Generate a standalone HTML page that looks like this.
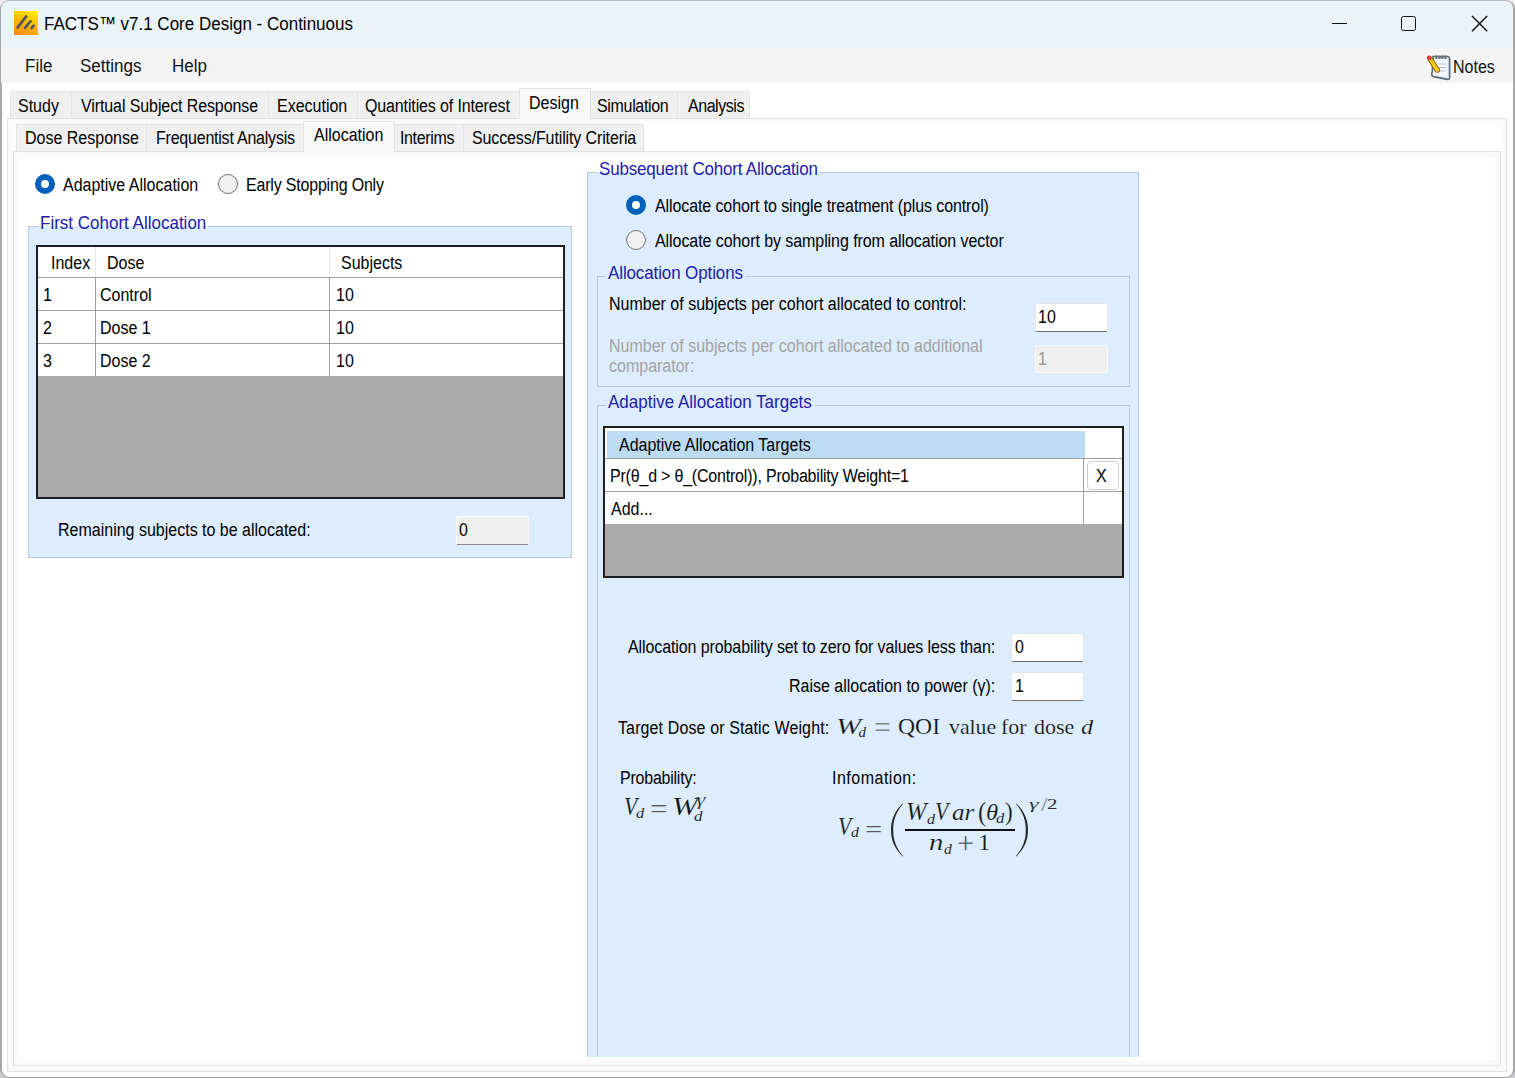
<!DOCTYPE html>
<html><head><meta charset="utf-8">
<style>
*{box-sizing:border-box;margin:0;padding:0}
html,body{width:1515px;height:1078px;overflow:hidden;background:linear-gradient(#eeeeee,#cdcdcf);font-family:"Liberation Sans",sans-serif;color:#000;position:relative}
.a{position:absolute}
.t{position:absolute;white-space:nowrap;font-size:16px;line-height:16px;color:#000;transform:scaleY(1.1);transform-origin:0 13.5px;margin-top:1px}
#win{position:absolute;left:0;top:0;width:1515px;height:1078px;border:2px solid #a8a8a8;border-top-color:#b8b8b8;border-bottom:1.5px solid #9c9c9c;border-radius:9px;background:#fff}
#title{position:absolute;left:1px;top:1px;width:1512px;height:46px;background:#eaf4f7;border-radius:8px 8px 0 0}
#menu{position:absolute;left:1px;top:47px;width:1512px;height:36px;background:#f4f4f4}
.tab{position:absolute;background:#f0f0f0;border:1px solid #e3e3e3;border-bottom:none}
.tab.sel{background:#f9f9f9;border-color:#e3e3e3}
.frame{position:absolute;border:1px solid #e3e3e3}
.grp{position:absolute;border:1px solid #b4c8dc;background:#ddedfd}
.gt{position:absolute;white-space:nowrap;font-size:17px;line-height:17px;color:#2020a8;transform:scaleY(1.1);transform-origin:0 14.4px}
.radio{position:absolute;width:20px;height:20px;border-radius:50%}
.radio.on{background:#fff;border:6px solid #005fb8}
.radio.off{background:#f2f2f2;border:1.5px solid #727272}
.tb{position:absolute;background:#fff;border:1px solid #e2e6ea;border-bottom:1.5px solid #6e6e6e;border-radius:2px}
.tb.dis{background:#f0f0f0;border:1px solid #fafafa;border-bottom:1.5px solid #8a8a8a}
.hl{position:absolute;background:#a0a0a0;height:1px}
.vl{position:absolute;background:#a0a0a0;width:1px}
.m{font-family:"Liberation Serif",serif;font-style:italic;color:#1a1a1a;position:absolute;white-space:nowrap;line-height:1}
.r{font-family:"Liberation Serif",serif;font-style:normal}
.mg{position:absolute;white-space:nowrap;font-family:"Liberation Serif",serif;color:#111;-webkit-text-stroke:0.2px #ddedfd}
</style></head><body>
<div id="win"></div>
<div id="title"></div>
<div id="menu"></div>

<!-- title bar -->
<svg class="a" style="left:14px;top:11px" width="24" height="24" viewBox="0 0 24 24">
  <defs><linearGradient id="ig" x1="0.75" y1="0" x2="0.25" y2="1"><stop offset="0" stop-color="#ffea00"/><stop offset="1" stop-color="#f98a10"/></linearGradient></defs>
  <rect width="24" height="24" fill="url(#ig)"/>
  <g stroke="#585858" stroke-width="2.7" stroke-linecap="round">
    <line x1="3.6" y1="16.6" x2="12.2" y2="5.4"/><line x1="11" y1="16.8" x2="16.6" y2="10.2"/><line x1="17.6" y1="17" x2="19.7" y2="14.6"/>
  </g>
</svg>
<div class="t" style="left:44px;top:15px;font-size:17px;line-height:17px">FACTS™ v7.1 Core Design - Continuous</div>
<div class="a" style="left:1332px;top:23px;width:15px;height:1.3px;background:#111"></div>
<div class="a" style="left:1401px;top:16px;width:15px;height:15px;border:1.6px solid #111;border-radius:2.5px"></div>
<svg class="a" style="left:1471px;top:15px" width="18" height="18" viewBox="0 0 18 18"><g stroke="#111" stroke-width="1.4"><line x1="1" y1="1" x2="16.2" y2="16.2"/><line x1="16.2" y1="1" x2="1" y2="16.2"/></g></svg>

<!-- menu -->
<div class="t" style="left:25px;top:57px;font-size:17px;line-height:17px;color:#111">File</div>
<div class="t" style="left:80px;top:57px;font-size:17px;line-height:17px;color:#111">Settings</div>
<div class="t" style="left:172px;top:57px;font-size:17px;line-height:17px;color:#111">Help</div>
<svg class="a" style="left:1422px;top:50px" width="34" height="34" viewBox="0 0 34 34">
  <path d="M11 6.5 L26 6.5 Q27.6 7 27.6 9 L27.6 27.8 Q27.4 29.6 25.5 29.4 L11.5 26.6 Q9.6 26 9.6 24.2 L10.3 21.5 Z" fill="#e3ebf4" stroke="#5d6872" stroke-width="1.6"/>
  <path d="M12.5 9 L25.5 9 L25.5 26.5 L12 24.5 Z" fill="#f2f6fb"/>
  <g stroke="#b7c7d9" stroke-width="1"><line x1="17" y1="14" x2="24" y2="14"/><line x1="17" y1="17.5" x2="24" y2="17.5"/><line x1="17" y1="21" x2="24" y2="21"/></g>
  <g fill="#6a737b"><rect x="13.5" y="5.5" width="2" height="3.5"/><rect x="16.5" y="5.5" width="2" height="3.5"/><rect x="19.5" y="5.5" width="2" height="3.5"/><rect x="22.5" y="5.5" width="2" height="3.5"/></g>
  <line x1="8.6" y1="9.6" x2="15.3" y2="20.2" stroke="#7a5e10" stroke-width="5.4" stroke-linecap="round"/>
  <line x1="8.6" y1="9.6" x2="15.3" y2="20.2" stroke="#f2cc12" stroke-width="3.6" stroke-linecap="round"/>
  <circle cx="7.2" cy="8" r="2.4" fill="#d8453a"/>
  <path d="M13.2 22 L16.6 21 L14.8 23.8 Z" fill="#e7a8a0"/>
</svg>
<div class="t" style="left:1453px;top:59px;color:#111">Notes</div>

<!-- outer tab frame -->
<div class="frame" style="left:7px;top:118px;width:1500px;height:954px;border-color:#e2e2e2;box-shadow:inset 0 0 0 1px #f7f7f7,inset 0 0 0 5px #fbfbfb"></div>
<div class="tab" style="left:10px;top:91px;width:62px;height:27px"></div>
<div class="tab" style="left:71px;top:91px;width:198px;height:27px"></div>
<div class="tab" style="left:268px;top:91px;width:90px;height:27px"></div>
<div class="tab" style="left:357px;top:91px;width:163px;height:27px"></div>
<div class="tab sel" style="left:519px;top:88px;width:72px;height:31px;border-bottom:none"></div>
<div class="tab" style="left:590px;top:91px;width:88px;height:27px"></div>
<div class="tab" style="left:677px;top:91px;width:73px;height:27px"></div>
<div class="t" style="left:18px;top:98px">Study</div>
<div class="t" style="left:81px;top:98px;letter-spacing:-0.1px">Virtual Subject Response</div>
<div class="t" style="left:277px;top:98px">Execution</div>
<div class="t" style="left:365px;top:98px;letter-spacing:-0.13px">Quantities of Interest</div>
<div class="t" style="left:529px;top:95px">Design</div>
<div class="t" style="left:597px;top:98px;letter-spacing:-0.33px">Simulation</div>
<div class="t" style="left:688px;top:98px;letter-spacing:-0.45px">Analysis</div>

<!-- inner tab frame -->
<div class="frame" style="left:13px;top:151px;width:1488px;height:915px;border-color:#e2e2e2;box-shadow:inset 0 0 0 5px #fafafa"></div>
<div class="tab" style="left:16px;top:124px;width:131px;height:27px"></div>
<div class="tab" style="left:146px;top:124px;width:158px;height:27px"></div>
<div class="tab sel" style="left:303px;top:121px;width:92px;height:31px"></div>
<div class="tab" style="left:394px;top:124px;width:70px;height:27px"></div>
<div class="tab" style="left:463px;top:124px;width:181px;height:27px"></div>
<div class="t" style="left:25px;top:130px">Dose Response</div>
<div class="t" style="left:156px;top:130px;letter-spacing:-0.22px">Frequentist Analysis</div>
<div class="t" style="left:314px;top:127px">Allocation</div>
<div class="t" style="left:400px;top:130px;letter-spacing:-0.36px">Interims</div>
<div class="t" style="left:472px;top:130px;letter-spacing:-0.12px">Success/Futility Criteria</div>

<!-- left: radios -->
<div class="radio on" style="left:35px;top:174px"></div>
<div class="t" style="left:63px;top:177px">Adaptive Allocation</div>
<div class="radio off" style="left:218px;top:174px"></div>
<div class="t" style="left:246px;top:177px;letter-spacing:-0.19px">Early Stopping Only</div>

<!-- First cohort group -->
<div class="grp" style="left:28px;top:226px;width:544px;height:332px"></div>
<div class="gt" style="left:38px;top:215px;padding:0 2px;background:linear-gradient(#fff 0,#fff 11px,#ddedfd 11px)">First Cohort Allocation</div>
<div class="a" style="left:36px;top:245px;width:529px;height:254px;border:2px solid #1e1e1e;background:#ababab"></div>
<div class="a" style="left:38px;top:247px;width:525px;height:129px;background:#fff"></div>
<div class="hl" style="left:38px;top:277px;width:525px"></div>
<div class="hl" style="left:38px;top:310px;width:525px"></div>
<div class="hl" style="left:38px;top:343px;width:525px"></div>
<div class="vl" style="left:95px;top:277px;height:99px"></div>
<div class="vl" style="left:329px;top:277px;height:99px"></div>
<div class="a" style="left:95px;top:247px;width:1px;height:29px;background:#e6e6e6"></div>
<div class="a" style="left:329px;top:247px;width:1px;height:29px;background:#e6e6e6"></div>
<div class="t" style="left:51px;top:255px">Index</div>
<div class="t" style="left:107px;top:255px">Dose</div>
<div class="t" style="left:341px;top:255px">Subjects</div>
<div class="t" style="left:43px;top:287px">1</div>
<div class="t" style="left:100px;top:287px">Control</div>
<div class="t" style="left:336px;top:287px">10</div>
<div class="t" style="left:43px;top:320px">2</div>
<div class="t" style="left:100px;top:320px">Dose 1</div>
<div class="t" style="left:336px;top:320px">10</div>
<div class="t" style="left:43px;top:353px">3</div>
<div class="t" style="left:100px;top:353px">Dose 2</div>
<div class="t" style="left:336px;top:353px">10</div>
<div class="t" style="left:58px;top:522px">Remaining subjects to be allocated:</div>
<div class="tb dis" style="left:456px;top:516px;width:73px;height:29px"></div>
<div class="t" style="left:459px;top:522px">0</div>

<!-- Right: Subsequent group -->
<div class="a" style="left:0;top:0;width:1515px;height:1057px;overflow:hidden">
<div class="grp" style="left:587px;top:172px;width:552px;height:950px"></div>
<div class="grp" style="left:597px;top:405px;width:533px;height:700px"></div>
</div>
<div class="gt" style="left:597px;top:161px;padding:0 2px;background:linear-gradient(#fff 0,#fff 11px,#ddedfd 11px);letter-spacing:-0.19px">Subsequent Cohort Allocation</div>
<div class="radio on" style="left:626px;top:195px"></div>
<div class="t" style="left:655px;top:198px;letter-spacing:-0.1px">Allocate cohort to single treatment (plus control)</div>
<div class="radio off" style="left:626px;top:230px"></div>
<div class="t" style="left:655px;top:233px;letter-spacing:-0.07px">Allocate cohort by sampling from allocation vector</div>

<div class="grp" style="left:597px;top:276px;width:533px;height:111px"></div>
<div class="gt" style="left:606px;top:265px;padding:0 2px;background:#ddedfd;letter-spacing:-0.12px">Allocation Options</div>
<div class="t" style="left:609px;top:296px">Number of subjects per cohort allocated to control:</div>
<div class="tb" style="left:1035px;top:303px;width:73px;height:29px"></div>
<div class="t" style="left:1038px;top:309px">10</div>
<div class="t" style="left:609px;top:338px;color:#a3a3a3">Number of subjects per cohort allocated to additional</div>
<div class="t" style="left:609px;top:358px;color:#a3a3a3">comparator:</div>
<div class="tb dis" style="left:1035px;top:345px;width:73px;height:28px;border-bottom:1px solid #fafafa"></div>
<div class="t" style="left:1038px;top:351px;color:#9a9a9a">1</div>

<div class="gt" style="left:606px;top:394px;padding:0 2px;background:#ddedfd">Adaptive Allocation Targets</div>
<div class="a" style="left:603px;top:426px;width:521px;height:152px;border:2px solid #1e1e1e;background:#ababab"></div>
<div class="a" style="left:605px;top:428px;width:517px;height:96px;background:#fff"></div>
<div class="a" style="left:607px;top:431px;width:478px;height:28px;background:#bcdcf4"></div>
<div class="hl" style="left:605px;top:458px;width:517px"></div>
<div class="hl" style="left:605px;top:491px;width:517px"></div>
<div class="vl" style="left:1083px;top:458px;height:66px"></div>
<div class="t" style="left:619px;top:437px">Adaptive Allocation Targets</div>
<div class="t" style="left:610px;top:468px;letter-spacing:-0.2px">Pr(θ_d &gt; θ_(Control)), Probability Weight=1</div>
<div class="t" style="left:611px;top:501px">Add...</div>
<div class="a" style="left:1087px;top:461px;width:32px;height:29px;border:1px solid #d0d0d0;border-radius:4px;background:#fdfdfd"></div>
<div class="t" style="left:1096px;top:468px">X</div>

<div class="t" style="left:628px;top:639px;letter-spacing:-0.1px">Allocation probability set to zero for values less than:</div>
<div class="tb" style="left:1011px;top:633px;width:73px;height:29px"></div>
<div class="t" style="left:1015px;top:639px">0</div>
<div class="t" style="left:789px;top:678px">Raise allocation to power (γ):</div>
<div class="tb" style="left:1011px;top:672px;width:73px;height:29px"></div>
<div class="t" style="left:1015px;top:678px">1</div>
<div class="t" style="left:618px;top:720px;letter-spacing:0.12px">Target Dose or Static Weight:</div>


<div class="t" style="left:620px;top:770px;letter-spacing:-0.23px">Probability:</div>

<div class="t" style="left:832px;top:770px;letter-spacing:0.5px">Infomation:</div>

<!-- formulas -->
<div class="mg" style="left:836.27px;top:714.67px;font-size:23px;line-height:23px;font-style:italic;transform:scale(1.316,1.007);transform-origin:0 0;">W</div>
<div class="mg" style="left:858.5px;top:724.5px;font-size:15px;line-height:15px;font-style:italic;-webkit-text-stroke:0;color:#2a2a2a;">d</div>
<div class="mg" style="left:874.1px;top:713.33px;font-size:23px;line-height:23px;transform:scale(1.3,1.333);transform-origin:0 0;color:#555">=</div>
<div class="mg" style="left:897.57px;top:714.64px;font-size:23px;line-height:23px;transform:scale(1.028,1.016);transform-origin:0 0;">QOI</div>
<div class="mg" style="left:948.5px;top:715.83px;font-size:23px;line-height:23px;transform:scale(0.947,0.956);transform-origin:0 0;">value</div>
<div class="mg" style="left:1001.04px;top:715.83px;font-size:23px;line-height:23px;transform:scale(0.958,0.956);transform-origin:0 0;">for</div>
<div class="mg" style="left:1034.04px;top:715.83px;font-size:23px;line-height:23px;transform:scale(0.956,0.956);transform-origin:0 0;">dose</div>
<div class="mg" style="left:1081.15px;top:715.83px;font-size:23px;line-height:23px;font-style:italic;transform:scale(1.055,0.956);transform-origin:0 0;">d</div>
<div class="mg" style="left:623.73px;top:794.72px;font-size:25px;line-height:25px;font-style:italic;transform:scale(0.871,0.971);transform-origin:0 0;">V</div>
<div class="mg" style="left:635.8px;top:806.62px;font-size:16px;line-height:16px;font-style:italic;transform:scale(1.025,0.875);transform-origin:0 0;-webkit-text-stroke:0;color:#2a2a2a;">d</div>
<div class="mg" style="left:650.36px;top:796.2px;font-size:25px;line-height:25px;transform:scale(1.242,1.067);transform-origin:0 0;color:#555">=</div>
<div class="mg" style="left:671.91px;top:794.72px;font-size:25px;line-height:25px;font-style:italic;transform:scale(1.243,0.971);transform-origin:0 0;">W</div>
<div class="mg" style="left:695.92px;top:792.05px;font-size:15px;line-height:15px;font-style:italic;transform:scale(1.58,1.05);transform-origin:0 0;-webkit-text-stroke:0.15px #ddedfd;color:#222;">γ</div>
<div class="mg" style="left:693.5px;top:809.62px;font-size:16px;line-height:16px;font-style:italic;transform:scale(1.062,0.875);transform-origin:0 0;-webkit-text-stroke:0;color:#2a2a2a;">d</div>
<div class="mg" style="left:838.24px;top:814.17px;font-size:25px;line-height:25px;font-style:italic;transform:scale(0.865,0.982);transform-origin:0 0;">V</div>
<div class="mg" style="left:850.6px;top:826.12px;font-size:16px;line-height:16px;font-style:italic;transform:scale(0.987,0.875);transform-origin:0 0;-webkit-text-stroke:0;color:#2a2a2a;">d</div>
<div class="mg" style="left:864.78px;top:816.7px;font-size:25px;line-height:25px;transform:scale(1.225,1.0);transform-origin:0 0;color:#555">=</div>
<div class="mg" style="left:905.54px;top:798.1px;font-size:24px;line-height:24px;font-style:italic;transform:scale(1.03,1.08);transform-origin:0 0;">W</div>
<div class="mg" style="left:927.0px;top:812.72px;font-size:16px;line-height:16px;font-style:italic;transform:scale(1.0,0.875);transform-origin:0 0;-webkit-text-stroke:0;color:#2a2a2a;">d</div>
<div class="mg" style="left:935.17px;top:798.1px;font-size:24px;line-height:24px;font-style:italic;transform:scale(0.913,1.08);transform-origin:0 0;">V</div>
<div class="mg" style="left:951.75px;top:799.66px;font-size:24px;line-height:24px;font-style:italic;transform:scale(1.05,0.982);transform-origin:0 0;">ar</div>
<div class="mg" style="left:977.77px;top:799.22px;font-size:24px;line-height:24px;transform:scale(1.033,1.095);transform-origin:0 0;">(</div>
<div class="mg" style="left:985.57px;top:800.68px;font-size:24px;line-height:24px;font-style:italic;transform:scale(1.03,0.931);transform-origin:0 0;">θ</div>
<div class="mg" style="left:996.1px;top:812.42px;font-size:16px;line-height:16px;font-style:italic;transform:scale(1.037,0.875);transform-origin:0 0;-webkit-text-stroke:0;color:#2a2a2a;">d</div>
<div class="mg" style="left:1005.03px;top:799.43px;font-size:24px;line-height:24px;transform:scale(0.967,1.043);transform-origin:0 0;">)</div>
<div class="mg" style="left:929.41px;top:831.07px;font-size:24px;line-height:24px;font-style:italic;transform:scale(1.19,0.936);transform-origin:0 0;">n</div>
<div class="mg" style="left:943.7px;top:842.82px;font-size:16px;line-height:16px;font-style:italic;transform:scale(0.975,0.875);transform-origin:0 0;-webkit-text-stroke:0;color:#2a2a2a;">d</div>
<div class="mg" style="left:957.33px;top:828.43px;font-size:24px;line-height:24px;transform:scale(1.273,1.282);transform-origin:0 0;color:#3a3a3a">+</div>
<div class="mg" style="left:977.74px;top:830.89px;font-size:22px;line-height:22px;transform:scale(1.129,1.029);transform-origin:0 0;">1</div>
<div class="mg" style="left:1029.27px;top:797.0px;font-size:16px;line-height:16px;font-style:italic;transform:scale(1.533,0.9);transform-origin:0 0;-webkit-text-stroke:0.15px #ddedfd;color:#222;">γ</div>
<div class="mg" style="left:1040.5px;top:795.55px;font-size:16px;line-height:16px;transform:scale(1.5,1.15);transform-origin:0 0;-webkit-text-stroke:0.3px #ddedfd;color:#333;">/</div>
<div class="mg" style="left:1047.2px;top:797.11px;font-size:16px;line-height:16px;transform:scale(1.3,0.945);transform-origin:0 0;-webkit-text-stroke:0;color:#2a2a2a;">2</div>
<svg class="a" style="left:888px;top:800px" width="20" height="60" viewBox="0 0 20 60"><path d="M14.6 3.6 C 5.5 12.5, 3 21, 3 30 C 3 39, 5.5 47.5, 14.6 56.4 L 15 56 C 7.2 47, 5.2 38.5, 5.2 30 C 5.2 21.5, 7.2 13, 15 4 Z" fill="#2a2a2a"/></svg>
<svg class="a" style="left:1012px;top:800px" width="20" height="60" viewBox="0 0 20 60"><path d="M4.4 3.6 C 13.5 12.5, 16 21, 16 30 C 16 39, 13.5 47.5, 4.4 56.4 L 4 56 C 11.8 47, 13.8 38.5, 13.8 30 C 13.8 21.5, 11.8 13, 4 4 Z" fill="#2a2a2a"/></svg>
<div class="a" style="left:905px;top:829px;width:110px;height:1.6px;background:#111"></div>
</body></html>
